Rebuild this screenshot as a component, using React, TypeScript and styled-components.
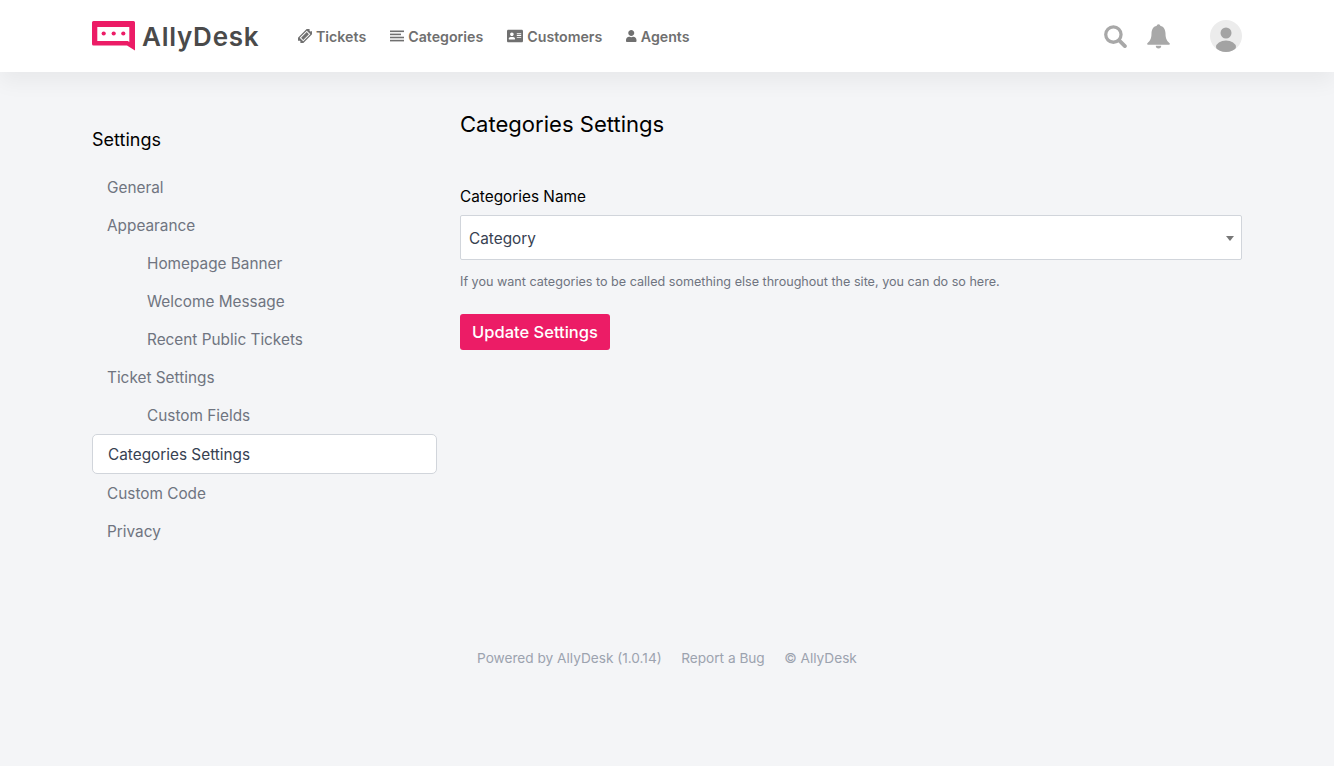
import React from "react";
import styled, { createGlobalStyle } from "styled-components";
import { FaAddressCard, FaUser } from "react-icons/fa";

const Global = createGlobalStyle`
  html, body { margin: 0; padding: 0; background: #f4f5f7; }
  body { font-family: Inter, "Liberation Sans", sans-serif; color: #000; -webkit-font-smoothing: antialiased; }
  * { box-sizing: border-box; }
`;

const Page = styled.div`
  min-height: 766px;
  background: #f4f5f7;
`;
const Header = styled.header`
  height: 72px;
  background: #fff;
  box-shadow: 0 10px 20px rgba(0, 0, 0, 0.05);
  padding: 0 92px;
  display: flex;
  align-items: center;
  position: relative;
`;
const Brand = styled.div`
  display: flex;
  align-items: center;
  gap: 7px;
  width: 206px;
`;
const BrandName = styled.span`
  font-family: Inter, sans-serif;
  font-weight: 600;
  font-size: 26px;
  letter-spacing: 0.75px;
  color: #4a4a4a;
`;
const Nav = styled.nav`
  display: flex;
  gap: 24px;
  flex: 1;
`;
const NavItem = styled.a`
  display: flex;
  align-items: center;
  gap: 4px;
  font-size: 14.2px;
  font-weight: 600;
  color: #6f6f6f;
  svg { color: #707070; }
`;
const AgentIcon = styled(FaUser)`
  width: 10.5px;
  height: 12px;
`;
const Tools = styled.div`
  display: flex;
  align-items: center;
  color: #a8a8a8;
`;
const ToolSlot = styled.span<{ $gap: number }>`
  display: flex;
  margin-right: ${(p) => p.$gap}px;
`;
const Avatar = styled.span`
  width: 32px;
  height: 32px;
  border-radius: 50%;
  background: #ececec;
  overflow: hidden;
  display: block;
`;
const Body = styled.div`
  display: flex;
  padding: 0 92px;
`;
const Sidebar = styled.aside`
  width: 345px;
  margin-right: 23px;
  padding-top: 56px;
`;
const SideTitle = styled.h2`
  margin: 0 0 16px;
  font-size: 18px;
  line-height: 24px;
  font-weight: 400;
  color: #000;
`;
const SideList = styled.div`
  display: flex;
  flex-direction: column;
`;
const SideItem = styled.a<{ $sub?: boolean }>`
  height: 38px;
  display: flex;
  align-items: center;
  padding-left: ${(p) => (p.$sub ? 55 : 15)}px;
  font-size: 15.35px;
  color: #6f7480;
`;
const SideActive = styled.a`
  height: 40px;
  display: flex;
  align-items: center;
  padding-left: 15px;
  font-size: 15.35px;
  color: #374151;
  background: #fff;
  border: 1px solid #d1d5db;
  border-radius: 5px;
`;
const Main = styled.main`
  flex: 1;
  padding-top: 36px;
`;
const Title = styled.h1`
  margin: 0 0 45px;
  font-size: 22.05px;
  line-height: 32px;
  font-weight: 400;
  color: #000;
`;
const Label = styled.label`
  display: block;
  font-size: 15.35px;
  line-height: 24px;
  margin-bottom: 6px;
  color: #000;
`;
const SelectBox = styled.div`
  height: 45px;
  background: #fff;
  border: 1px solid #d1d5db;
  border-radius: 2px;
  display: flex;
  align-items: center;
  justify-content: space-between;
  padding: 1px 8px 0;
  font-size: 15.35px;
  color: #374151;
`;
const Caret = styled.span`
  width: 0;
  height: 0;
  border-left: 4px solid transparent;
  border-right: 4px solid transparent;
  border-top: 5px solid #777;
  margin-right: -1px;
`;
const Help = styled.p`
  margin: 13px 0 23px;
  font-size: 12.6px;
  line-height: 18px;
  color: #6f7480;
`;
const Button = styled.button`
  width: 150px;
  height: 36px;
  border: 0;
  border-radius: 3px;
  background: #ec1c66;
  color: #fff;
  font-family: inherit;
  font-size: 16.5px;
  font-weight: 500;
  padding: 0;
`;
const Footer = styled.footer`
  display: flex;
  gap: 19.5px;
  margin-top: 98px;
  padding-left: 477px;
  font-size: 13.65px;
  line-height: 20px;
  color: #9ca3af;
`;

const sections: { label: string; sub?: boolean; active?: boolean }[] = [
  { label: "General" },
  { label: "Appearance" },
  { label: "Homepage Banner", sub: true },
  { label: "Welcome Message", sub: true },
  { label: "Recent Public Tickets", sub: true },
  { label: "Ticket Settings" },
  { label: "Custom Fields", sub: true },
  { label: "Categories Settings", active: true },
  { label: "Custom Code" },
  { label: "Privacy" },
];

const Logo = () => (
  <svg width="43" height="30" viewBox="0 0 43 30">
    <path
      fillRule="evenodd"
      fill="#ec1c66"
      d="M1.5 0h40a1.5 1.5 0 0 1 1.500 1.500V29.500l-8-5H1.500A1.500 1.500 0 0 1 0 23V1.500A1.500 1.500 0 0 1 1.500 0zM5.300 6v14h30.500l1.500 1V6z"
    />
    <circle cx="11.700" cy="12.500" r="2.100" fill="#ec1c66" />
    <circle cx="21.700" cy="12.500" r="2.100" fill="#ec1c66" />
    <circle cx="31.300" cy="12.500" r="2.100" fill="#ec1c66" />
  </svg>
);

const TicketGlyph = () => (
  <svg width="14" height="14" viewBox="0 0 14 14">
    <g transform="rotate(-45 7 7)">
      <path
        fill="currentColor"
        d="M-1.500 3.200h17v2.300a1.500 1.500 0 0 0 0 3v2.300h-17V8.500a1.500 1.500 0 0 0 0-3z"
      />
      <rect x="2.500" y="5" width="9" height="4" fill="none" stroke="#fff" strokeWidth="1" />
    </g>
  </svg>
);

const LinesIcon = () => (
  <svg width="14" height="14" viewBox="0 0 14 14" fill="currentColor">
    <rect x="0" y="1.500" width="14" height="1.600" />
    <rect x="0" y="4.600" width="11" height="1.600" />
    <rect x="0" y="7.700" width="14" height="1.600" />
    <rect x="0" y="10.800" width="14" height="1.600" />
  </svg>
);

const SearchIcon = () => (
  <svg width="23" height="23" viewBox="0 0 24 24" fill="none" stroke="currentColor">
    <circle cx="9.800" cy="10" r="8" strokeWidth="3.400" />
    <path d="M15.800 16l6 6" strokeWidth="4" strokeLinecap="round" />
  </svg>
);

const BellIcon = () => (
  <svg width="23" height="25" viewBox="0 0 23 25" fill="currentColor">
    <circle cx="11.500" cy="2" r="1.800" />
    <path d="M11.500 1.500c4.600 0 7 3.600 7 8 0 5.200 1.400 7.200 4.100 9.800.5.500.2 1.400-.6 1.400H1c-.8 0-1.100-.9-.6-1.400C3.100 16.700 4.500 14.700 4.500 9.500c0-4.400 2.400-8 7-8z" />
    <path d="M8.800 21.800h5.400a2.700 2.700 0 0 1-5.400 0z" />
  </svg>
);

export default function App() {
  return (
    <Page>
      <Global />
      <Header>
        <Brand>
          <Logo />
          <BrandName>AllyDesk</BrandName>
        </Brand>
        <Nav>
          <NavItem><TicketGlyph />Tickets</NavItem>
          <NavItem><LinesIcon />Categories</NavItem>
          <NavItem><FaAddressCard size={16} />Customers</NavItem>
          <NavItem><AgentIcon />Agents</NavItem>
        </Nav>
        <Tools>
          <ToolSlot $gap={20}><SearchIcon /></ToolSlot>
          <ToolSlot $gap={40}><BellIcon /></ToolSlot>
          <Avatar>
            <svg width="32" height="32" viewBox="0 0 32 32">
              <circle cx="16" cy="13" r="5.500" fill="#a3a3a3" />
              <ellipse cx="16" cy="27" rx="10" ry="6.500" fill="#a3a3a3" />
            </svg>
          </Avatar>
        </Tools>
      </Header>
      <Body>
        <Sidebar>
          <SideTitle>Settings</SideTitle>
          <SideList>
            {sections.map((s) =>
              s.active ? (
                <SideActive key={s.label}>{s.label}</SideActive>
              ) : (
                <SideItem key={s.label} $sub={s.sub}>{s.label}</SideItem>
              )
            )}
          </SideList>
        </Sidebar>
        <Main>
          <Title>Categories Settings</Title>
          <Label>Categories Name</Label>
          <SelectBox>Category<Caret /></SelectBox>
          <Help>If you want categories to be called something else throughout the site, you can do so here.</Help>
          <Button>Update Settings</Button>
        </Main>
      </Body>
      <Footer>
        <span>Powered by AllyDesk (1.0.14)</span>
        <span>Report a Bug</span>
        <span>© AllyDesk</span>
      </Footer>
    </Page>
  );
}
